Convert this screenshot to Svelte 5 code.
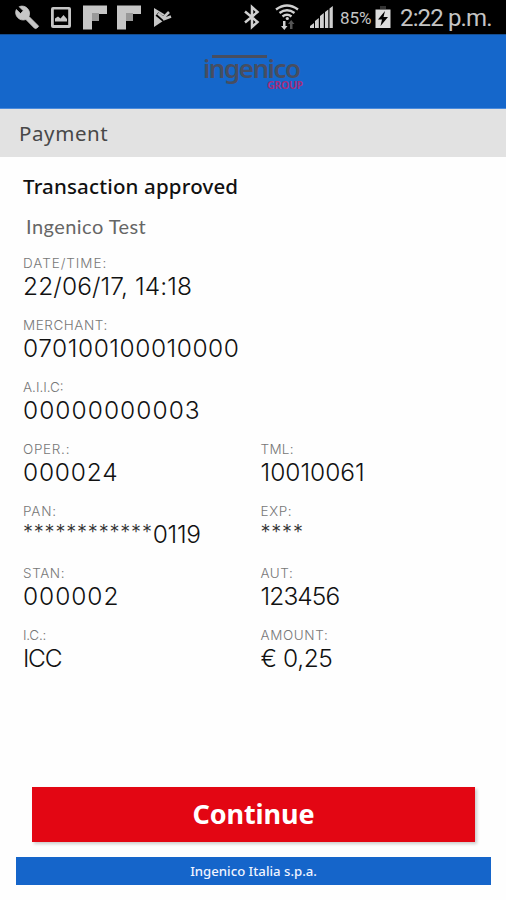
<script>
  const rows = [
    [{ label: 'DATE/TIME:', value: '22/06/17, 14:18', ls: 0.95, vs: 0.1 }],
    [{ label: 'MERCHANT:', value: '070100100010000', ls: 0.55, vs: 0.55 }],
    [{ label: 'A.I.I.C:', value: '00000000003', ls: 0, vs: 1.05 }],
    [
      { label: 'OPER.:', value: '000024', ls: 0.7, vs: 0.8 },
      { label: 'TML:', value: '10010061', ls: 0.3, vs: 0 }
    ],
    [
      { label: 'PAN:', stars: '************', value: '0119', ls: 0.8, vs: -0.3 },
      { label: 'EXP:', stars: '****', value: '', ls: 0.6, vs: 0 }
    ],
    [
      { label: 'STAN:', value: '000002', ls: 0.6, vs: 0.95 },
      { label: 'AUT:', value: '123456', ls: 0.5, vs: -0.9 }
    ],
    [
      { label: 'I.C.:', value: 'ICC', ls: -0.2, vs: -1.3 },
      { label: 'AMOUNT:', value: '€ 0,25', ls: 0.6, vs: -0.4 }
    ]
  ];
</script>

<div class="screen">
  <div class="status">
    <svg width="180" height="34" viewBox="0 0 180 34" fill="#c6c6c6">
      <path d="M38 25.500 L29 16.500 C30.200 13.500 29.500 10.500 27.300 8.300 C25 6 21.800 5.500 19.200 6.700 L23.300 10.800 L20.500 13.600 L16.300 9.500 C15 12.200 15.600 15.500 17.900 17.800 C20.100 20 23.200 20.500 25.900 19.500 L34.300 28 Q35.500 29 36.500 28.200 L38.200 26.900 Q39 26.200 38 25.500Z" stroke="#c6c6c6" stroke-width=".8" />
      <path fill-rule="evenodd" d="M53 7h16a2 2 0 0 1 2 2v17a2 2 0 0 1-2 2H53a2 2 0 0 1-2-2V9a2 2 0 0 1 2-2zm.8 2.500v15.500h14.400V9.500z" />
      <path d="M55 21.500v-3l3-2 2.500 2 3-3.500 3.500 4v2.500z" />
      <path d="M83 5.500h24V14H99v7h-7v8.500h-9z" />
      <path d="M92 13h7v8h-7z" fill="#999" />
      <path d="M117 5.500h24V14h-8v7h-7v8.500h-9z" />
      <path d="M126 13h7v8h-7z" fill="#999" />
      <path d="M154 8l15 9-15 10z" />
      <path d="M157 14l6 5 8-8" fill="none" stroke="#000" stroke-width="4.500" />
      <path d="M158 13.500l5 4.500 6-6M163 19.500l8-3" fill="none" stroke="#c6c6c6" stroke-width="2.600" />
    </svg>
    <svg class="signals" width="94" height="34" viewBox="240 0 94 34" fill="#d0d0d0">
      <path d="M245 11.500l12.500 10.500-5.500 5V7l5.500 5-12.500 10.500" fill="none" stroke="#d0d0d0" stroke-width="2.500" />
      <g fill="none" stroke="#d0d0d0" stroke-width="2.400">
        <path d="M276 9.500q11-8 22 0M279.500 13q7.500-5.500 15 0M282.500 16.500q4.500-3.500 9 0" />
      </g>
      <circle cx="287.300" cy="18.500" r="1.600" />
      <path d="M283 21h2.500v5h2l-3.200 4-3.300-4h2z" />
      <path d="M290 29v-5h-2l3.200-4 3.300 4h-2v5z" fill="#555" />
      <path d="M310 28v-2l4-3v5zM315 28v-7l3.800-3v10zM320 28V16l3.800-3v15zM325 28v-16l3.300-2.500v18.500zM329.500 28V8.500L332.800 6v22z" />
    </svg>
    <span class="pct">85%</span>
    <svg class="battery" width="16" height="34" viewBox="375 0 16 34">
      <path d="M380 6h6v3h-6z" fill="#333" />
      <path d="M375.500 9.500h15V28h-15z" fill="#ddd" />
      <path d="M385 11l-7 8.500h4l-1.500 6.500 7.500-9h-4.500z" fill="#000" />
    </svg>
    <span class="clock">2:22 p.m.</span>
  </div>

  <header>
    <div class="logo">
      <span class="word">ingenico</span>
      <span class="bar"></span>
      <span class="group">GROUP</span>
    </div>
  </header>

  <div class="title"><span>Payment</span></div>

  <main>
    <h1><span>Transaction approved</span></h1>
    <p class="shop"><span>Ingenico Test</span></p>
    {#each rows as row}
      <div class="row">
        {#each row as f}
          <div class="field">
            <div class="label"><span style:letter-spacing="{f.ls}px">{f.label}</span></div>
            <div class="value">
              {#if f.stars}<span class="stars">{f.stars}</span>{/if}<span style:letter-spacing="{f.vs}px">{f.value}</span>
            </div>
          </div>
        {/each}
      </div>
    {/each}
  </main>

  <button>Continue</button>
  <footer><span>Ingenico Italia s.p.a.</span></footer>
</div>

<style>
  :global(body) { margin: 0; background: #fefefe; }
  .screen { width: 506px; height: 900px; display: flex; flex-direction: column; background: #fefefe; overflow: hidden; }
  .status { height: 34px; flex: none; background: #000; display: flex; color: #c4c4c4; font-family: Roboto, sans-serif; white-space: nowrap; }
  .status svg { flex: none; }
  .signals { margin-left: 60px; }
  .pct { width: 35px; margin-left: 6px; font-size: 17px; line-height: 36px; }
  .clock { margin-left: 9px; font-size: 24px; line-height: 37px; letter-spacing: -0.850px; }
  header { height: 75px; flex: none; box-sizing: border-box; background: #1567cb; border-top: 1px solid #154d8f; border-bottom: 1px solid #4b8bdc; display: flex; justify-content: center; }
  .logo { position: relative; width: 100px; height: 60px; font-family: "Noto Sans", sans-serif; white-space: nowrap; }
  .word { position: absolute; left: 0; top: 13px; font-size: 26px; line-height: 40px; font-weight: 600; color: #474e61; letter-spacing: -1.500px; }
  .bar { position: absolute; left: 9px; top: 20px; width: 55px; height: 3px; background: #474e61; }
  .group { position: absolute; left: 64px; top: 42px; font-size: 10.500px; line-height: 16px; font-weight: 700; color: #a22e7c; letter-spacing: -0.300px; }
  .title { height: 48px; flex: none; background: #e2e2e2; padding-left: 19px; font: 400 20.500px/48px "Noto Sans", sans-serif; color: #484848; letter-spacing: 0.600px; }
  main { padding-left: 23px; height: 620px; flex: none; }
  h1 { margin: 0; padding-top: 13px; font: 500 20.500px/32px "Noto Sans", sans-serif; color: #111; letter-spacing: 0.160px; }
  .shop { margin: 0 0 0 3px; font: 400 20px/28px Lato, sans-serif; color: #666; padding-top: 10px; height: 43px; letter-spacing: 0.450px; }
  .row { display: flex; height: 62px; }
  .field { width: 237.500px; white-space: nowrap; font-family: Inter, sans-serif; }
  .label { font-size: 13.500px; line-height: 17px; height: 16px; font-weight: 300; color: #777; }
  .value { display: flex; font-size: 24.500px; line-height: 30px; font-weight: 300; color: #111; }
  .stars { font-size: 20px; line-height: 26px; letter-spacing: 0.800px; color: #333; }
  button { margin: 10px 0 0 32px; width: 443px; height: 55px; flex: none; border: 0; padding: 0 0 2px; background: #e30613; color: #fff; font: 700 27px/53px "Noto Sans", sans-serif; letter-spacing: -0.100px; box-shadow: 2px 2px 3px #0003; }
  footer { margin: 15px 0 0 16px; width: 475px; height: 28px; flex: none; background: #1565ca; color: #f0f4ff; text-align: center; font: 500 13.200px/29px "Noto Sans", sans-serif; }
</style>
